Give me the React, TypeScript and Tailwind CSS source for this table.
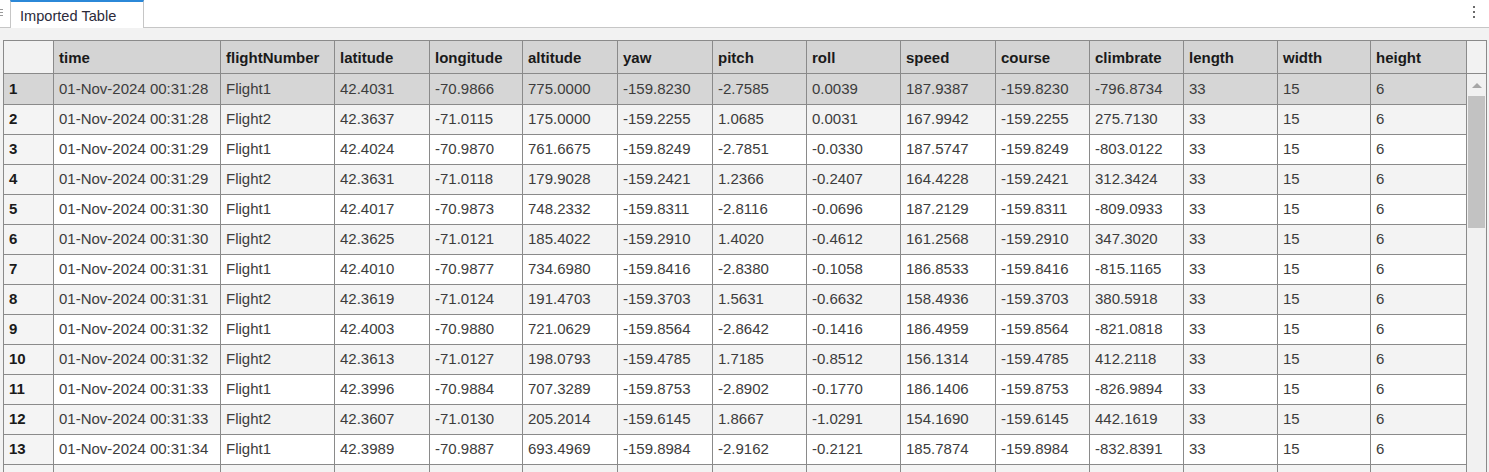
import React from "react";

const headers = [
  "",
  "time",
  "flightNumber",
  "latitude",
  "longitude",
  "altitude",
  "yaw",
  "pitch",
  "roll",
  "speed",
  "course",
  "climbrate",
  "length",
  "width",
  "height",
];

const widths = [
  "w-[50px]",
  "w-[167px]",
  "w-[114px]",
  "w-[95px]",
  "w-[93px]",
  "w-[95px]",
  "w-[95px]",
  "w-[94px]",
  "w-[94px]",
  "w-[95px]",
  "w-[94px]",
  "w-[94px]",
  "w-[94px]",
  "w-[93px]",
  "w-[96px]",
];

const rows: string[][] = [
  ["01-Nov-2024 00:31:28", "Flight1", "42.4031", "-70.9866", "775.0000", "-159.8230", "-2.7585", "0.0039", "187.9387", "-159.8230", "-796.8734"],
  ["01-Nov-2024 00:31:28", "Flight2", "42.3637", "-71.0115", "175.0000", "-159.2255", "1.0685", "0.0031", "167.9942", "-159.2255", "275.7130"],
  ["01-Nov-2024 00:31:29", "Flight1", "42.4024", "-70.9870", "761.6675", "-159.8249", "-2.7851", "-0.0330", "187.5747", "-159.8249", "-803.0122"],
  ["01-Nov-2024 00:31:29", "Flight2", "42.3631", "-71.0118", "179.9028", "-159.2421", "1.2366", "-0.2407", "164.4228", "-159.2421", "312.3424"],
  ["01-Nov-2024 00:31:30", "Flight1", "42.4017", "-70.9873", "748.2332", "-159.8311", "-2.8116", "-0.0696", "187.2129", "-159.8311", "-809.0933"],
  ["01-Nov-2024 00:31:30", "Flight2", "42.3625", "-71.0121", "185.4022", "-159.2910", "1.4020", "-0.4612", "161.2568", "-159.2910", "347.3020"],
  ["01-Nov-2024 00:31:31", "Flight1", "42.4010", "-70.9877", "734.6980", "-159.8416", "-2.8380", "-0.1058", "186.8533", "-159.8416", "-815.1165"],
  ["01-Nov-2024 00:31:31", "Flight2", "42.3619", "-71.0124", "191.4703", "-159.3703", "1.5631", "-0.6632", "158.4936", "-159.3703", "380.5918"],
  ["01-Nov-2024 00:31:32", "Flight1", "42.4003", "-70.9880", "721.0629", "-159.8564", "-2.8642", "-0.1416", "186.4959", "-159.8564", "-821.0818"],
  ["01-Nov-2024 00:31:32", "Flight2", "42.3613", "-71.0127", "198.0793", "-159.4785", "1.7185", "-0.8512", "156.1314", "-159.4785", "412.2118"],
  ["01-Nov-2024 00:31:33", "Flight1", "42.3996", "-70.9884", "707.3289", "-159.8753", "-2.8902", "-0.1770", "186.1406", "-159.8753", "-826.9894"],
  ["01-Nov-2024 00:31:33", "Flight2", "42.3607", "-71.0130", "205.2014", "-159.6145", "1.8667", "-1.0291", "154.1690", "-159.6145", "442.1619"],
  ["01-Nov-2024 00:31:34", "Flight1", "42.3989", "-70.9887", "693.4969", "-159.8984", "-2.9162", "-0.2121", "185.7874", "-159.8984", "-832.8391"],
];

export default function App() {
  return (
    <div
      className="w-[1489px] h-[472px] overflow-hidden bg-[#f2f2f2] flex flex-col"
      style={{ fontFamily: '"Liberation Sans", Arial, sans-serif' }}
    >
      {/* Top tab bar */}
      <div className="h-[28px] shrink-0 bg-white border-b border-[#c6c6c6] flex items-stretch relative">
        <div className="w-[10px] flex flex-col gap-[2px] pt-[9px]">
          <div className="w-[3px] h-[1px] bg-[#9a9a9a]" />
          <div className="w-[3px] h-[1px] bg-[#9a9a9a]" />
          <div className="w-[3px] h-[1px] bg-[#9a9a9a]" />
        </div>
        <div className="w-[134px] h-[28px] bg-white border-t-2 border-t-[#2b88d8] border-l border-r border-l-[#c6c6c6] border-r-[#c6c6c6] flex items-center pl-[9px] pt-[3px] text-[14.6px] text-[#2b2b3b]">
          Imported Table
        </div>
        <div className="flex-1" />
        <div className="w-[16px] mr-[7px] flex flex-col items-center gap-[3px] pt-[6px]">
          <div className="w-[2px] h-[2px] bg-[#6a6a6a]" />
          <div className="w-[2px] h-[2px] bg-[#6a6a6a]" />
          <div className="w-[2px] h-[2px] bg-[#6a6a6a]" />
        </div>
      </div>

      {/* Table area */}
      <div className="pt-[12px] pl-[3px]">
        <div className="flex border-l border-t border-[#8a8a8a] w-[1484px]">
          <div className="flex flex-col">
            {/* Header */}
            <div className="flex h-[33px]">
              {headers.map((h, i) => (
                <div
                  key={i}
                  className={`${widths[i]} ${i === 0 ? "bg-[#f2f2f2]" : "bg-[#d4d4d4]"} h-full border-r border-b border-[#8a8a8a] flex items-center pl-[5px] pt-[3px] font-bold text-[15px] text-[#1a1a1a] whitespace-nowrap overflow-hidden`}
                >
                  {h}
                </div>
              ))}
            </div>
            {/* Body */}
            {rows.map((r, ri) => {
              const selected = ri === 0;
              const bg = selected ? "bg-[#d6d6d6]" : ri % 2 === 1 ? "bg-[#f3f3f3]" : "bg-white";
              const cells = [String(ri + 1), ...r, "33", "15", "6"];
              return (
                <div key={ri} className={`flex ${ri === 0 ? "h-[31px]" : "h-[30px]"}`}>
                  {cells.map((c, ci) => (
                    <div
                      key={ci}
                      className={`${widths[ci]} ${
                        ci === 0 ? (selected ? "bg-[#d6d6d6]" : "bg-[#f4f4f4]") : bg
                      } h-full border-r border-b border-[#8a8a8a] flex items-center pl-[5px] text-[15px] whitespace-nowrap overflow-hidden ${
                        ci === 0 ? "font-bold text-[#1a1a1a]" : "text-[#3c3c3c]"
                      }`}
                    >
                      {c}
                    </div>
                  ))}
                </div>
              );
            })}
            {/* Partially visible next row (content below the fold) */}
            <div className="flex h-[30px]">
              {widths.map((w, ci) => (
                <div
                  key={ci}
                  className={`${w} ${ci === 0 ? "bg-[#f4f4f4]" : "bg-[#f3f3f3]"} h-full border-r border-b border-[#8a8a8a]`}
                />
              ))}
            </div>
          </div>
          {/* Scroll column */}
          <div className="w-[20px] flex flex-col border-r border-[#8a8a8a]">
            <div className="h-[33px] shrink-0 bg-[#f2f2f2] border-b border-[#8a8a8a]" />
            <div className="flex-1 bg-[#f1f1f1] flex flex-col items-center">
              <div className="h-[22px] flex items-center justify-center">
                <div className="w-0 h-0 border-l-[5px] border-r-[5px] border-b-[5px] border-l-transparent border-r-transparent border-b-[#a6a6a6]" />
              </div>
              <div className="w-[17px] h-[132px] bg-[#c2c2c2]" />
            </div>
          </div>
        </div>
      </div>
    </div>
  );
}
